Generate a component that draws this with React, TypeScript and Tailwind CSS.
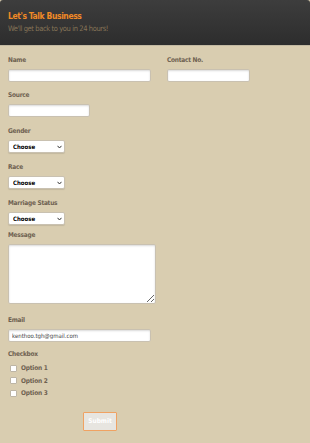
import React from 'react';

const font = { fontFamily: '"Liberation Sans Narrow", "DejaVu Sans Condensed", "Liberation Sans", sans-serif' };

const Label: React.FC<{ children: React.ReactNode }> = ({ children }) => (
    <div className="text-[6.5px] leading-[10px] font-bold tracking-[-0.25px] text-[#6e6150] mb-[4px]">{children}</div>
);

const TextInput: React.FC<{ w: string; value?: string }> = ({ w, value }) => (
    <input
        type="text"
        defaultValue={value}
        className={`block ${w} h-[13px] bg-white border border-[#c9c1b1] rounded-[2px] shadow-[inset_0_1px_2px_rgba(0,0,0,0.15)] px-[3px] text-[6px] leading-[11px] text-[#444] outline-none`}
    />
);

const Choose: React.FC = () => (
    <div className="relative w-[57px] h-[13px]">
        <select className="block appearance-none w-full h-full bg-white border border-[#c9c1b1] rounded-[2px] shadow-[0_1px_1px_rgba(0,0,0,0.1)] pl-[4px] py-0 text-[6px] leading-[11px] font-bold text-black outline-none">
            <option>Choose</option>
        </select>
        <svg className="absolute right-[3px] top-[5px] pointer-events-none" width="5" height="4" viewBox="0 0 5 4">
            <path d="M0.5 0.8 L2.5 3 L4.5 0.8" stroke="#333" strokeWidth="1" fill="none" />
        </svg>
    </div>
);

const Option: React.FC<{ label: string }> = ({ label }) => (
    <label className="flex items-center gap-[4px] h-[12.5px] pl-[2px]">
        <input
            type="checkbox"
            className="block appearance-none w-[7px] h-[7px] bg-white border border-[#bdb5a5] rounded-[1px]"
        />
        <span className="text-[6.5px] leading-[10px] font-bold tracking-[-0.2px] text-[#6e6150]">{label}</span>
    </label>
);

export default function App() {
    return (
        <div className="min-h-[443px] w-full bg-[#d9cdb0] leading-none" style={font}>
            {/* Header */}
            <div className="h-[46px] rounded-t-[3px] border-b border-[#c2b9a2] px-[8px] pt-[11px]"
                style={{ background: 'linear-gradient(180deg, #3d3d3d 0%, #2d2d2d 100%)' }}>
                <div className="text-[8.5px] leading-[10px] font-bold tracking-[-0.4px] text-[#f08a26]">Let's Talk Business</div>
                <div className="mt-[3px] text-[7.5px] leading-[10px] tracking-[-0.4px] text-[#857357]">We'll get back to you in 24 hours!</div>
            </div>

            <form className="px-[8px] pt-[9px] flex flex-col">
                <div className="flex gap-[16px]">
                    <div>
                        <Label>Name</Label>
                        <TextInput w="w-[143px]" />
                    </div>
                    <div>
                        <Label>Contact No.</Label>
                        <TextInput w="w-[83px]" />
                    </div>
                </div>

                <div className="mt-[8px]">
                    <Label>Source</Label>
                    <TextInput w="w-[82px]" />
                </div>

                <div className="mt-[9px]">
                    <Label>Gender</Label>
                    <Choose />
                </div>

                <div className="mt-[9px]">
                    <Label>Race</Label>
                    <Choose />
                </div>

                <div className="mt-[9px]">
                    <Label>Marriage Status</Label>
                    <Choose />
                </div>

                <div className="mt-[5px]">
                    <Label>Message</Label>
                    <textarea className="block w-[148px] h-[60px] bg-white border border-[#c9c1b1] rounded-[2px] shadow-[inset_0_1px_2px_rgba(0,0,0,0.15)] outline-none resize" />
                </div>

                <div className="mt-[11px]">
                    <Label>Email</Label>
                    <TextInput w="w-[143px]" value="kenthoo.tgh@gmail.com" />
                </div>

                <div className="mt-[7px]">
                    <Label>Checkbox</Label>
                    <div className="flex flex-col -mt-[1px]">
                        <Option label="Option 1" />
                        <Option label="Option 2" />
                        <Option label="Option 3" />
                    </div>
                </div>

                <div className="mt-[12px] ml-[75px]">
                    <button type="button"
                        className="block w-[34px] h-[19px] bg-[#e7e5e0] border border-[#f0a262] rounded-[1px] text-[6.5px] font-bold text-white">
                        Submit
                    </button>
                </div>
            </form>
        </div>
    );
}
